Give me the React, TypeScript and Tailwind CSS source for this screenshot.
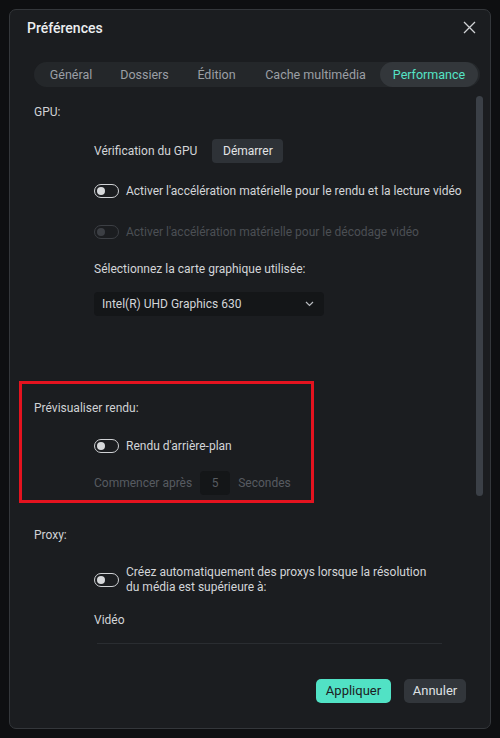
import React from 'react';

const font = { fontFamily: 'Roboto, "Noto Sans", Arial, sans-serif' };

function Toggle({ disabled = false }: { disabled?: boolean }) {
    return (
        <span
            className={`flex h-[14px] w-[25px] shrink-0 items-center rounded-full border-[1.5px] px-[2px] ${
                disabled ? 'border-[#3c3f44]' : 'border-[#cfd1d4]'
            }`}
        >
            <span className={`h-[8px] w-[8px] rounded-full ${disabled ? 'bg-[#3c3f44]' : 'bg-[#d6d8da]'}`} />
        </span>
    );
}

const tabs = [
    { label: 'Général', w: 'w-[72px]' },
    { label: 'Dossiers', w: 'w-[75px]' },
    { label: 'Édition', w: 'w-[69px]' },
    { label: 'Cache multimédia', w: 'w-[129px]' },
    { label: 'Performance', w: 'w-[98px]', active: true },
];

export default function App() {
    return (
        <div className="flex h-[738px] w-[500px] flex-col bg-[#0e0f11] p-[9px]" style={font}>
            <div className="flex flex-1 flex-col overflow-hidden rounded-[7px] border border-[#34373b] bg-[#1b1d20] text-[12px] leading-[18px] text-[#d3d5d8]">
                {/* header */}
                <div className="flex h-[34px] items-center justify-between pl-[17px] pr-[14px] pt-[1px]">
                    <span className="text-[14px] font-medium text-[#eceef0]">Préférences</span>
                    <svg width="13" height="13" viewBox="0 0 13 13" className="text-[#d0d2d5]">
                        <path d="M1 1L12 12M12 1L1 12" stroke="currentColor" strokeWidth="1.3" />
                    </svg>
                </div>

                {/* tabs */}
                <div className="mr-[10px] mt-[18px] flex h-[25px] w-[446px] items-center self-end whitespace-nowrap rounded-full bg-[#24272a] pl-[1px] text-[12.5px]">
                    {tabs.map((t) => (
                        <span
                            key={t.label}
                            className={`flex h-full items-center justify-center rounded-full ${t.w} ${
                                t.active ? 'bg-[#33373b] text-[#55e4c6]' : 'text-[#9b9fa5]'
                            }`}
                        >
                            {t.label}
                        </span>
                    ))}
                </div>

                {/* scroll area */}
                <div className="mt-[9px] flex min-h-0 flex-1">
                    <div className="flex-1 whitespace-nowrap pl-[24px] pr-[10px]">
                        <div className="mt-[7px] text-[#d0d2d5]">GPU:</div>
                        <div className="pl-[60px]">
                            <div className="mt-[18px] flex h-[24px] items-center">
                                <span>Vérification du GPU</span>
                                <span className="ml-[15px] flex h-[24px] w-[71px] items-center justify-center rounded-[4px] bg-[#2e3237] text-[#e2e4e6]">
                                    Démarrer
                                </span>
                            </div>
                            <div className="mt-[19px] flex h-[18px] items-center gap-[7px]">
                                <Toggle />
                                <span>Activer l'accélération matérielle pour le rendu et la lecture vidéo</span>
                            </div>
                            <div className="mt-[23px] flex h-[18px] items-center gap-[7px] text-[#4b4f54]">
                                <Toggle disabled />
                                <span>Activer l'accélération matérielle pour le décodage vidéo</span>
                            </div>
                            <div className="mt-[19px]">Sélectionnez la carte graphique utilisée:</div>
                            <div className="mt-[14px] flex h-[24px] w-[230px] items-center justify-between rounded-[4px] bg-[#141618] pl-[8px] pr-[10px]">
                                <span>Intel(R) UHD Graphics 630</span>
                                <svg width="9" height="6" viewBox="0 0 9 6">
                                    <path d="M1 1l3.5 3.5L8 1" stroke="#b9bcc0" strokeWidth="1.2" fill="none" />
                                </svg>
                            </div>
                        </div>

                        {/* highlighted section */}
                        <div className="ml-[-15px] mt-[65px] w-[295px] border-[3px] border-[#e4131f] pb-[5px] pl-[12px] pt-[15px]">
                            <div className="text-[#d0d2d5]">Prévisualiser rendu:</div>
                            <div className="pl-[60px]">
                                <div className="mt-[20px] flex h-[18px] items-center gap-[7px]">
                                    <Toggle />
                                    <span>Rendu d'arrière-plan</span>
                                </div>
                                <div className="mt-[16px] flex h-[24px] items-center text-[#575b61]">
                                    <span>Commencer après</span>
                                    <span className="ml-[8px] flex h-[24px] w-[30px] items-center justify-center rounded-[4px] bg-[#141618]">
                                        5
                                    </span>
                                    <span className="ml-[8px]">Secondes</span>
                                </div>
                            </div>
                        </div>

                        <div className="mt-[23px] text-[#d0d2d5]">Proxy:</div>
                        <div className="pl-[60px]">
                            <div className="mt-[21px] flex items-center gap-[7px]">
                                <Toggle />
                                <span className="w-[304px] whitespace-normal leading-[15px]">
                                    Créez automatiquement des proxys lorsque la résolution du média est supérieure à:
                                </span>
                            </div>
                            <div className="mt-[16px]">Vidéo</div>
                            <div className="ml-[3px] mt-[14px] h-px w-[345px] bg-[#2a2d31]" />
                        </div>
                    </div>
                    <div className="w-[14px] shrink-0 pr-[7px]">
                        <div className="h-[400px] w-[7px] rounded-full bg-[#3b4047]" />
                    </div>
                </div>

                {/* footer */}
                <div className="flex items-center justify-end gap-[13px] pb-[25px] pr-[24px] text-[13px]">
                    <span className="flex h-[24px] w-[75px] items-center justify-center rounded-[5px] bg-[#51e2c5] text-[#1d2022]">
                        Appliquer
                    </span>
                    <span className="flex h-[24px] w-[62px] items-center justify-center rounded-[5px] bg-[#32363b] text-[#dfe1e3]">
                        Annuler
                    </span>
                </div>
            </div>
        </div>
    );
}
